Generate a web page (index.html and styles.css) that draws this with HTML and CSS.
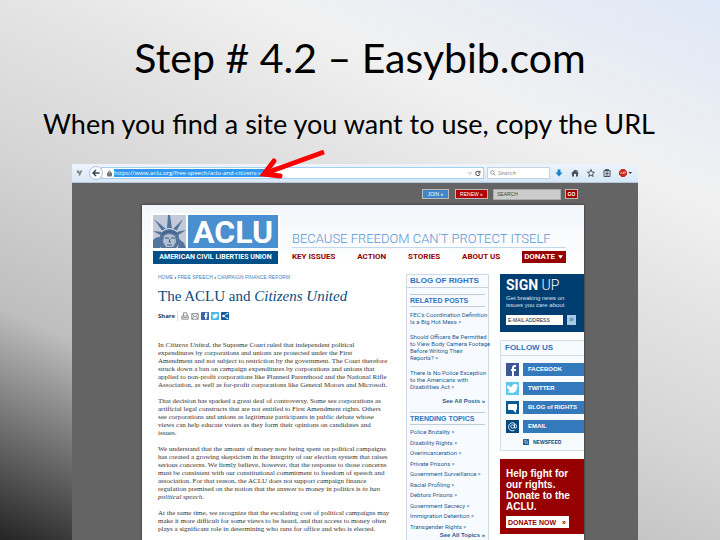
FILE: index.html
```html
<!DOCTYPE html>
<html lang="en">
<head>
  <meta charset="UTF-8" />
  <meta name="viewport" content="width=device-width, initial-scale=1.0" />
  <title>Step # 4.2 – Easybib.com</title>
  <link rel="stylesheet" href="styles.css">
</head>
<body>
  <main class="slide">
    <h1 class="slide-title">Step # 4.2 – Easybib.com</h1>
    <p class="slide-text">When you find a site you want to use, copy the URL</p>

    <section class="browser">
      <svg class="arrow" viewBox="0 0 72 34" aria-hidden="true">
        <path d="M68 4 L10 25" />
        <path class="head" d="M18 13 L8 26 L24 28" />
      </svg>
      <div class="toolbar">
        <svg class="tool-icon dim" viewBox="0 0 16 16"><path d="M1 2h6l1 4 2-4h5l-3 6-3 6H6l1-4-4-2z" /></svg>
        <button class="back" aria-label="Back"><svg viewBox="0 0 16 16"><path d="M8 2 2 8l6 6M2 8h13" /></svg></button>
        <div class="address">
          <svg class="lock" viewBox="0 0 10 12"><path d="M1 5h8v6H1z" fill="#777" /><path d="M3 5V3a2 2 0 0 1 4 0v2" fill="none" /></svg>
          <span class="url">https://www.aclu.org/free-speech/aclu-and-citizens-united</span>
          <svg class="reload" viewBox="0 0 26 12"><path d="M2 4h7L5.500 9z" fill="none" stroke="#aaa" /><path d="M23 3a4 4 0 1 0 1 4M20 5h4V1" fill="none" stroke="#666" stroke-width="2" /></svg>
        </div>
        <label class="web-search">
          <svg viewBox="0 0 10 10"><circle cx="4" cy="4" r="3" /><path d="m6 6 3 3" /></svg>
          <input type="text" placeholder="Search" aria-label="Web search" />
        </label>
        <div class="tools">
          <svg class="tool-icon blue" viewBox="0 0 16 16"><path d="M5 1h6v6h4l-7 8-7-8h4z" /></svg>
          <svg class="tool-icon" viewBox="0 0 16 16"><path d="M8 1 0 9h2v6h4v-5h4v5h4V9h2l-3-3V2h-2v2z" /></svg>
          <svg class="tool-icon line" viewBox="0 0 16 16"><path d="m8 1 2 5 5 .5-4 3.500 1.500 5L8 12l-4.500 3L5 10 1 6.500 6 6z" /></svg>
          <svg class="tool-icon line" viewBox="0 0 16 16"><path d="M2 3h12v12H2zM5 3V1h6v2M5 6h6M5 9h6M5 12h6" /></svg>
          <svg class="abp" viewBox="0 0 26 16"><path fill="#c8281e" d="M5 0h6l5 5v6l-5 5H5l-5-5V5z" /><path d="M3 10l2-4 2 4M9 6v4M9 6h4v2H9" fill="none" stroke="#fff" /><path fill="#333" d="M19 6h7l-3.500 4z" /></svg>
        </div>
      </div>

      <div class="site">
        <div class="site-top">
          <button class="btn-join">JOIN »</button>
          <button class="btn-renew">RENEW »</button>
          <input class="site-search" type="text" value="SEARCH" aria-label="Search site" />
          <button class="btn-go">GO</button>
        </div>

        <div class="page">
          <header class="masthead">
            <div class="logo">
              <div class="logo-top">
                <svg class="liberty" viewBox="0 0 33 33">
                  <rect width="33" height="33" fill="#c3cbda" />
                  <g fill="#54759b">
                    <path d="M15 0h2l2 13h-5zM1 4l12 10-3 3zM30 4 20 14l3 3zM0 16l11 1-2 4zM33 15l-10 2 1 4z" />
                    <path d="M8 18q8-10 17 0l2 9-4 6H8l-3-6z" />
                    <path d="M0 25q5-5 8-2l-1 10H0zM26 24l5 4 2 5h-8z" />
                  </g>
                  <path fill="#b3c0d2" d="M11 21q5-4 11 0l1 6-3 5h-7l-3-5z" />
                  <path fill="none" stroke="#38587e" d="M9 19q7-5 15 0M12 23h4M18 23h4M17 24l-1 3h2M14 30h5" />
                  <path fill="none" stroke="#e2e7ee" d="M8 17q8-7 17 0" />
                </svg>
                <span class="logo-name">ACLU</span>
              </div>
              <div class="logo-sub">AMERICAN CIVIL LIBERTIES UNION</div>
            </div>
            <div class="mast-right">
              <p class="tagline">BECAUSE FREEDOM CAN'T PROTECT ITSELF</p>
              <nav class="menu">
                <a href="#">KEY ISSUES</a>
                <a href="#">ACTION</a>
                <a href="#">STORIES</a>
                <a href="#">ABOUT US</a>
                <a class="donate" href="#">DONATE <svg viewBox="0 0 6 4"><path d="M0 0h6L3 4z" /></svg></a>
              </nav>
            </div>
          </header>

          <div class="columns">
            <article class="article">
              <nav class="crumbs"><a href="#">HOME</a> <b>›</b> <a href="#">FREE SPEECH</a> <b>›</b> <a href="#">CAMPAIGN FINANCE REFORM</a></nav>
              <h2>The ACLU and <em>Citizens United</em></h2>
              <div class="share">
                <span>Share</span>
                <svg viewBox="0 0 10 10"><path d="M3 5V1h4l1 4M1 5h8v4H1zM2 7h6" fill="none" stroke="#777" /></svg>
                <svg viewBox="0 0 10 10"><path d="M1 2h8v7H1zM1 2l4 4 4-4M1 9l3-4M9 9 6 5" fill="none" stroke="#777" /></svg>
                <svg viewBox="0 0 10 10"><rect width="10" height="10" rx="1" fill="#3b64a5" /><path d="M8 2H6v7M4 5h4" fill="none" stroke="#fff" stroke-width="2" /></svg>
                <svg viewBox="0 0 10 10"><rect width="10" height="10" rx="1" fill="#45b8ea" /><path d="M1 3l3 1q1-3 4-1l1 0-1 2q-1 4-6 3l1-1z" fill="#fff" /></svg>
                <svg viewBox="0 0 10 10"><rect width="10" height="10" rx="1" fill="#0b5c98" /><path d="M8 2 3 5l5 3" fill="none" stroke="#fff" /><circle cx="3" cy="5" r="1.500" fill="#fff" /><circle cx="8" cy="2" r="1" fill="#fff" /><circle cx="8" cy="8" r="1" fill="#fff" /></svg>
              </div>
              <p>In <em>Citizens United</em>, the Supreme Court ruled that independent political<br>expenditures by corporations and unions are protected under the First<br>Amendment and not subject to restriction by the government. The Court therefore<br>struck down a ban on campaign expenditures by corporations and unions that<br>applied to non-profit corporations like Planned Parenthood and the National Rifle<br>Association, as well as for-profit corporations like General Motors and Microsoft.</p>
              <p>That decision has sparked a great deal of controversy. Some see corporations as<br>artificial legal constructs that are not entitled to First Amendment rights. Others<br>see corporations and unions as legitimate participants in public debate whose<br>views can help educate voters as they form their opinions on candidates and<br>issues.</p>
              <p>We understand that the amount of money now being spent on political campaigns<br>has created a growing skepticism in the integrity of our election system that raises<br>serious concerns. We firmly believe, however, that the response to those concerns<br>must be consistent with our constitutional commitment to freedom of speech and<br>association. For that reason, the ACLU does not support campaign finance<br>regulation premised on the notion that the answer to money in politics is <em>to ban<br>political speech.</em></p>
              <p>At the same time, we recognize that the escalating cost of political campaigns may<br>make it more difficult for some views to be heard, and that access to money often<br>plays a significant role in determining who runs for office and who is elected.</p>
            </article>

            <aside class="blog">
              <h3>BLOG OF RIGHTS</h3>
              <h4>RELATED POSTS</h4>
              <ul class="posts">
                <li><a href="#">FEC's Coordination Definition<br>Is a Big Hot Mess »</a></li>
                <li><a href="#">Should Officers Be Permitted<br>to View Body Camera Footage<br>Before Writing Their<br>Reports? »</a></li>
                <li><a href="#">There Is No Police Exception<br>to the Americans with<br>Disabilities Act »</a></li>
              </ul>
              <a class="see-all" href="#">See All Posts »</a>
              <h4>TRENDING TOPICS</h4>
              <ul class="topics">
                <li><a href="#">Police Brutality »</a></li>
                <li><a href="#">Disability Rights »</a></li>
                <li><a href="#">Overincarceration »</a></li>
                <li><a href="#">Private Prisons »</a></li>
                <li><a href="#">Government Surveillance »</a></li>
                <li><a href="#">Racial Profiling »</a></li>
                <li><a href="#">Debtors Prisons »</a></li>
                <li><a href="#">Government Secrecy »</a></li>
                <li><a href="#">Immigration Detention »</a></li>
                <li><a href="#">Transgender Rights »</a></li>
              </ul>
              <a class="see-all" href="#">See All Topics »</a>
            </aside>

            <aside class="side">
              <form class="signup">
                <h3><b>SIGN</b> UP</h3>
                <p>Get breaking news on<br>issues you care about</p>
                <div class="signup-row">
                  <input type="text" value="E-MAIL ADDRESS" aria-label="E-mail address" />
                  <button type="button" aria-label="Sign up">»</button>
                </div>
              </form>
              <section class="follow">
                <h3>FOLLOW US</h3>
                <ul>
                  <li><svg viewBox="0 0 13 13"><rect width="13" height="13" fill="#3c5793" /><path d="M10 3H9Q7 3 7 5v8M5 7h5" fill="none" stroke="#fff" stroke-width="2" /></svg><a href="#">FACEBOOK</a></li>
                  <li><svg viewBox="0 0 13 13"><rect width="13" height="13" fill="#5fc8f0" /><path d="M2 3q2 2 4 2 0-3 3-3l3 1-1 2q0 6-6 6l-4-1 3-1-2-2-1-2z" fill="#fff" /></svg><a href="#">TWITTER</a></li>
                  <li><svg viewBox="0 0 13 13"><rect width="13" height="13" fill="#0c5a94" /><path d="M3 3h7q1 0 1 1v4q0 1-1 1v3L7 9H3Q2 9 2 8V4q0-1 1-1z" fill="#fff" /></svg><a href="#">BLOG of RIGHTS</a></li>
                  <li><svg viewBox="0 0 13 13"><rect width="13" height="13" fill="#04497f" /><circle cx="6.500" cy="6.500" r="1.700" fill="none" stroke="#dce9f5" /><path d="M8.500 4v4q2 1 2-1.500a4 4 0 1 0-2 3.800" fill="none" stroke="#dce9f5" /></svg><a href="#">EMAIL</a></li>
                </ul>
                <a class="newsfeed" href="#"><svg viewBox="0 0 10 10"><rect width="10" height="10" rx="1" fill="#1d5f99" /><path d="M2 2q6 0 6 6M2 5q3 0 3 3" fill="none" stroke="#fff" /></svg>NEWSFEED</a>
              </section>
              <section class="help">
                <p>Help fight for<br>our rights.<br>Donate to the<br>ACLU.</p>
                <button>DONATE NOW <span>»</span></button>
              </section>
            </aside>
          </div>
        </div>
      </div>
    </section>
  </main>
</body>
</html>
```

FILE: styles.css
```css
* { box-sizing: border-box; }
body, h1, h2, h3, h4, p, ul { margin: 0; padding: 0; }
ul { list-style: none; }
a { text-decoration: none; color: inherit; }
button, input { font-family: inherit; border: none; padding: 0; margin: 0; border-radius: 0; min-width: 0; }
svg { display: block; flex: none; }

body { font-family: "Liberation Sans", Arial, sans-serif; color: #000; }
.slide {
  display: flex; flex-direction: column; height: 100vh; overflow: hidden;
  background: linear-gradient(24deg, #242424 0%, #bebebe 27%, #d5d5d5 46%, #e4e4e4 63%, #f1f1f1 76%, #dfe8f7 100%);
}
.slide-title { padding-top: 32px; font: 400 41px/52px Lato, sans-serif; text-align: center; }
.slide-text { padding: 22px 0 22px 43px; font: 400 27px/36px Lato, sans-serif; white-space: nowrap; }

/* browser window */
.browser { position: relative; flex: 1; display: flex; flex-direction: column; min-height: 0; margin: 0 82px 0 72px; background: #646464; }
.arrow { position: absolute; left: 184px; top: -16px; width: 72px; height: 34px; z-index: 2; }
.arrow path { fill: none; stroke: #f00; stroke-width: 5; }
.arrow .head { stroke-linecap: round; }
.toolbar { flex: none; display: flex; align-items: center; height: 19px; padding: 0 4px; background: linear-gradient(#eef4fb, #d8e8f8); border-bottom: 1px solid #b8c8d8; }
.tool-icon { width: 8px; height: 8px; fill: #4a545e; }
.tool-icon.dim { width: 7px; fill: #888; }
.tool-icon.blue { fill: #1583d0; }
.tool-icon.line { fill: none; stroke: #4a545e; stroke-width: 2; }
.back { position: relative; z-index: 1; display: grid; place-items: center; width: 14px; height: 14px; margin-left: 6px; border: 1px solid #b5c3d1; border-radius: 50%; background: #fafcff; }
.back svg { width: 8px; height: 8px; fill: none; stroke: #3a4450; stroke-width: 3; }
.address { flex: 1; display: flex; align-items: center; height: 12px; margin-left: -2px; padding-left: 5px; background: #fff; border: 1px solid #a4cff4; }
.lock { width: 5px; height: 7px; stroke: #777; stroke-width: 2; }
.url { margin-left: 2px; font: 6px/8px "Open Sans", sans-serif; color: #fff; background: #3096f0; white-space: nowrap; }
.reload { width: 14px; height: 7px; margin: 0 2px 0 auto; }
.web-search { display: flex; align-items: center; width: 63px; height: 12px; margin-left: 3px; padding-left: 2px; background: #fff; border: 1px solid #c5d3e0; }
.web-search svg { width: 6px; height: 6px; fill: none; stroke: #666; }
.web-search input { width: 50px; height: 10px; margin-left: 2px; background: none; font: italic 6px/10px "Open Sans", sans-serif; }
.web-search input::placeholder { color: #888; }
.tools { display: flex; align-items: center; gap: 8px; width: 79px; margin-left: 5px; }
.abp { width: 13px; height: 8px; }

/* site */
.site { flex: 1; min-height: 0; }
.site-top { display: flex; align-items: center; justify-content: flex-end; height: 22px; padding-right: 60px; }
.site-top button { height: 10px; border: 1px solid #bbb; color: #fff; font-size: 5px; line-height: 8px; }
.site-top .btn-join { width: 27px; background: #3f86cb; }
.site-top .btn-renew { width: 33px; margin-left: 6px; background: #b50000; }
.site-search { width: 68px; height: 11px; margin: 0 4px 0 5px; padding-left: 3px; background: #ccc; border: 1px solid #aaa; color: #444; font-size: 5px; }
.site-top .btn-go { width: 13px; background: #a00000; font-weight: bold; }
.page { margin: 0 54px 0 70px; padding-left: 11px; background: #fff linear-gradient(#f2f6fa, #fff 60px) no-repeat; box-shadow: 0 0 2px #222; }

.masthead { display: flex; padding-top: 10px; }
.logo { width: 125px; background: #fff; box-shadow: 0 0 0 2px #fff; }
.logo-top { display: flex; gap: 2px; }
.liberty { width: 33px; height: 33px; }
.logo-name { flex: 1; height: 33px; background: #4a8fd0; color: #fff; font: 700 32px/35px Roboto, sans-serif; text-align: center; }
.logo-sub { height: 13px; margin-top: 3px; background: #005088; color: #fff; font: 700 7px/13px Roboto, sans-serif; text-align: center; white-space: nowrap; }
.mast-right { width: 274px; margin-left: 14px; padding-top: 16px; }
.tagline { height: 17px; border-bottom: 1px solid #c3d9ea; color: #5b96d2; font: 300 13px/15px Roboto, sans-serif; white-space: nowrap; }
.menu { display: flex; justify-content: space-between; align-items: center; margin-top: 3px; color: #970000; font: 700 8px/12px Roboto, sans-serif; white-space: nowrap; }
.donate { display: flex; align-items: center; gap: 3px; padding: 0 3px 0 2px; background: #970000; color: #fff; }
.donate svg { width: 5px; height: 4px; fill: #fff; }

.columns { display: flex; align-items: flex-start; padding-top: 10px; }
.article { flex: 1; min-width: 0; padding-left: 5px; color: #333; font: 7px/8px "Liberation Serif", serif; white-space: nowrap; }
.crumbs { color: #3c85c6; font: 5px/6px "Liberation Sans", sans-serif; }
.crumbs b { color: #036; }
.article h2 { margin-top: 7px; color: #0a4b80; font: 400 15px/18px "Liberation Serif", serif; }
.share { display: flex; align-items: center; gap: 2px; height: 10px; margin: 6px 0 20px; }
.share span { height: 10px; margin-right: 1px; padding-right: 2px; border-right: 1px solid #ddd; font: 700 6px/10px "Open Sans", sans-serif; }
.share svg { width: 8px; height: 8px; }
.article p { margin-bottom: 8px; }

.blog { width: 83px; height: 280px; padding: 0 3px; border: 1px solid #ccdbe7; background: #f7fbff; color: #1f5d92; white-space: nowrap; }
.blog h3 { margin: 0 -3px 6px; padding-left: 3px; border-bottom: 1px solid #c5d2dc; color: #2d75bd; font-size: 8px; line-height: 12px; }
.blog h4 { border: solid #c0cdd6; border-width: 1px 0; color: #2d75bd; font-size: 7px; line-height: 11px; }
.posts, .topics { font-family: Roboto, sans-serif; font-size: 6px; }
.posts { padding-top: 4px; line-height: 7px; }
.posts li { margin-bottom: 8px; }
.see-all { display: block; font-size: 6px; font-weight: bold; line-height: 7px; text-align: right; }
.see-all + h4 { margin-top: 7px; }
.topics { padding-top: 2px; line-height: 10px; }
.topics li:nth-child(even) { line-height: 11px; }

.side { width: 84px; margin-left: 11px; }
.signup { height: 58px; padding: 4px 0 0 6px; background: #003e72; color: #d5e2ee; }
.signup h3 { color: #fff; font: 300 14px/14px Roboto, sans-serif; }
.signup h3 b { font-weight: 700; }
.signup p { margin-top: 3px; font-size: 6px; line-height: 7px; white-space: nowrap; }
.signup-row { display: flex; gap: 4px; margin-top: 6px; }
.signup input { width: 57px; height: 10px; padding-left: 2px; background: #fff; color: #222; font-size: 5px; }
.signup button { width: 9px; height: 10px; background: #a8c9e8; color: #17558e; font-size: 8px; line-height: 8px; }
.follow { height: 111px; margin-top: 8px; border: 1px solid #d3dfe8; border-right: none; background: #f8fbfe; }
.follow h3 { padding-left: 4px; border-bottom: 1px solid #d3dfe8; color: #2d75bd; font-size: 8px; line-height: 14px; }
.follow ul { display: grid; gap: 6px; padding: 7px 0 0 5px; }
.follow li { display: flex; gap: 4px; }
.follow li svg { width: 13px; height: 13px; }
.follow li a { flex: 1; padding-left: 5px; background: #3579bd; color: #fff; font-size: 6px; font-weight: bold; line-height: 13px; white-space: nowrap; }
.newsfeed { display: flex; align-items: center; gap: 4px; margin: 6px 0 0 22px; color: #0a4b80; font: 700 5px/6px "Liberation Sans", sans-serif; }
.newsfeed svg { width: 6px; height: 6px; }
.help { height: 75px; margin-top: 8px; padding: 9px 0 0 6px; background: #970000; color: #fff; }
.help p { font-size: 10px; font-weight: bold; line-height: 11px; white-space: nowrap; }
.help button { display: flex; justify-content: space-between; align-items: center; width: 63px; height: 12px; margin-top: 4px; padding: 0 3px 0 2px; background: #fff; color: #970000; font-size: 7px; font-weight: bold; white-space: nowrap; }
```
